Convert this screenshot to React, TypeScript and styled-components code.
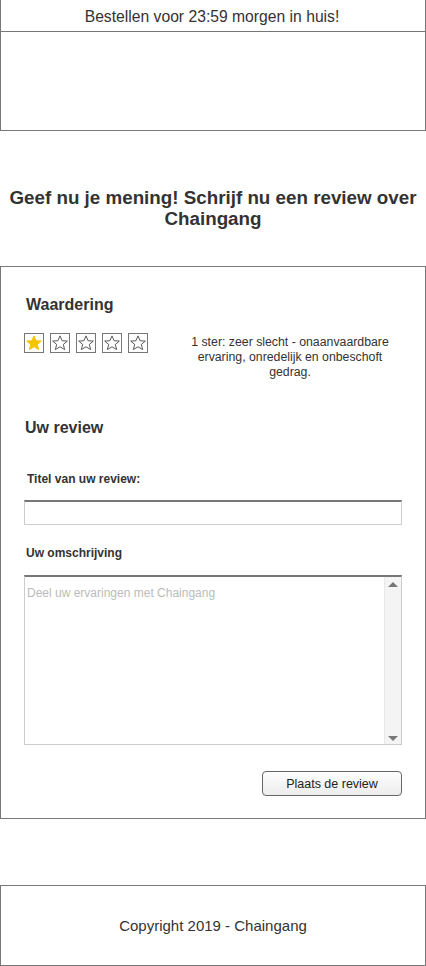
import styled, { createGlobalStyle } from "styled-components";

const GlobalStyle = createGlobalStyle`
  body {
    margin: 0;
    background: #ffffff;
    font-family: 'Liberation Sans', Arial, sans-serif;
    color: #333333;
  }
`;

const Page = styled.div`
  width: 426px;
  display: flex;
  flex-direction: column;
`;

// header box with the shipping notice on top
const Header = styled.header`
  border: 1px solid #777777;
  border-top: none;
  height: 131px;
  box-sizing: border-box;
  display: flex;
  flex-direction: column;
`;

const Notice = styled.div`
  height: 32px;
  border-bottom: 1px solid #777777;
  display: flex;
  align-items: center;
  justify-content: center;
  font-size: 15.7px;
  color: #333333;
  padding: 2px 2px 0 0;
  box-sizing: border-box;
`;

const PageTitle = styled.h1`
  margin: 56px 4px 37px;
  font-size: 18.8px;
  line-height: 21px;
  font-weight: bold;
  text-align: center;
  color: #333333;
`;

const ReviewBox = styled.section`
  border: 1px solid #777777;
  padding: 28px 23px 22px 23px;
  display: flex;
  flex-direction: column;
`;

const SectionTitle = styled.h2<{ $top?: number; $left?: number }>`
  margin: ${(p) => p.$top ?? 0}px 0 0 ${(p) => p.$left ?? 1}px;
  font-size: 16px;
  line-height: 20px;
  font-weight: bold;
  color: #333333;
`;

const RatingRow = styled.div`
  margin-top: 18px;
  display: flex;
  justify-content: space-between;
  align-items: flex-start;
`;

const Stars = styled.div`
  display: flex;
  gap: 6px;
`;

const StarBox = styled.div`
  width: 20px;
  height: 20px;
  box-sizing: border-box;
  border: 1px solid #777777;
  display: flex;
  align-items: center;
  justify-content: center;
`;

const RatingText = styled.p`
  width: 226px;
  margin: 1.5px -1px 0 0;
  font-size: 12.3px;
  line-height: 15px;
  text-align: center;
  color: #333333;
`;

const Label = styled.label<{ $top: number; $left?: number }>`
  display: block;
  margin: ${(p) => p.$top}px 0 0 ${(p) => p.$left ?? 2}px;
  font-size: 12px;
  line-height: 15px;
  font-weight: bold;
  color: #333333;
`;

const TextInput = styled.input`
  margin-top: 13.5px;
  height: 25px;
  box-sizing: border-box;
  border: 1px solid #cccccc;
  border-top: 2px solid #777777;
  background: #ffffff;
  outline: none;
  padding: 0 4px;
  font: 12px 'Liberation Sans', Arial, sans-serif;
`;

const TextAreaFrame = styled.div`
  margin-top: 14.5px;
  height: 170px;
  box-sizing: border-box;
  border: 1px solid #cccccc;
  border-top: 2px solid #777777;
  display: flex;
`;

const TextArea = styled.textarea`
  flex: 1;
  border: none;
  resize: none;
  outline: none;
  overflow: hidden;
  padding: 9px 2px;
  font: 12px 'Liberation Sans', Arial, sans-serif;
  color: #333333;

  &::placeholder {
    color: #bbbbbb;
  }
`;

const ScrollTrack = styled.div`
  width: 17px;
  background: #f4f4f4;
  border-left: 1px solid #e8e8e8;
  display: flex;
  flex-direction: column;
  justify-content: space-between;
  align-items: center;
  padding: 5px 0 3px;
  box-sizing: border-box;
`;

const Arrow = styled.span<{ $down?: boolean }>`
  width: 0;
  height: 0;
  border-left: 5px solid transparent;
  border-right: 5px solid transparent;
  ${(p) =>
    p.$down
      ? "border-top: 5px solid #777777;"
      : "border-bottom: 5px solid #777777;"}
`;

const Actions = styled.div`
  margin-top: 26px;
  display: flex;
  justify-content: flex-end;
`;

const SubmitButton = styled.button`
  width: 140px;
  height: 25px;
  border: 1px solid #666666;
  border-radius: 4px;
  background: linear-gradient(#fefefe, #ececec);
  font: 12.5px 'Liberation Sans', Arial, sans-serif;
  color: #222222;
  padding: 0;
`;

const Footer = styled.footer`
  margin-top: 66px;
  height: 81px;
  box-sizing: border-box;
  border: 1px solid #777777;
  display: flex;
  align-items: center;
  justify-content: center;
  font-size: 15px;
  color: #333333;
`;

const StarIcon = ({ filled }: { filled?: boolean }) => (
  <svg width="18" height="18" viewBox="0 0 24 24">
    <polygon
      points="12,2.5 14.8,9 21.8,9.4 16.4,13.9 18.2,20.8 12,17 5.8,20.8 7.6,13.9 2.2,9.4 9.2,9"
      fill={filled ? "#f5c400" : "#ffffff"}
      stroke={filled ? "#f5c400" : "#555555"}
      strokeWidth="1.3"
      strokeLinejoin="miter"
    />
  </svg>
);

export default function App() {
  return (
    <Page>
      <GlobalStyle />
      <Header>
        <Notice>Bestellen voor 23:59 morgen in huis!</Notice>
      </Header>

      <PageTitle>Geef nu je mening! Schrijf nu een review over Chaingang</PageTitle>

      <ReviewBox>
        <SectionTitle $left={2}>Waardering</SectionTitle>
        <RatingRow>
          <Stars>
            {[1, 2, 3, 4, 5].map((n) => (
              <StarBox key={n}>
                <StarIcon filled={n === 1} />
              </StarBox>
            ))}
          </Stars>
          <RatingText>
            1 ster: zeer slecht - onaanvaardbare ervaring, onredelijk en onbeschoft gedrag.
          </RatingText>
        </RatingRow>

        <SectionTitle $top={38}>Uw review</SectionTitle>

        <Label $top={34} $left={3}>Titel van uw review:</Label>
        <TextInput type="text" />

        <Label $top={20.5}>Uw omschrijving</Label>
        <TextAreaFrame>
          <TextArea placeholder="Deel uw ervaringen met Chaingang" />
          <ScrollTrack>
            <Arrow />
            <Arrow $down />
          </ScrollTrack>
        </TextAreaFrame>

        <Actions>
          <SubmitButton>Plaats de review</SubmitButton>
        </Actions>
      </ReviewBox>

      <Footer>Copyright 2019 - Chaingang</Footer>
    </Page>
  );
}
